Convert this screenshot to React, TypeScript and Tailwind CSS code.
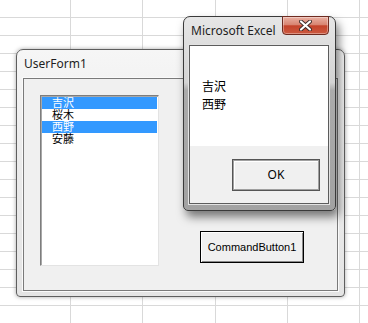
import React from 'react';

const uiFont = { fontFamily: '"Noto Sans", "Liberation Sans", sans-serif' };
const jpFont = { fontFamily: '"Liberation Sans", "Noto Sans CJK JP", sans-serif' };

const gridCols = [70, 142, 215, 287, 359];
const gridRows = Array.from({ length: 17 }, (_, i) => 17 + i * 18);

const listItems = [
  { label: '吉沢', selected: true },
  { label: '桜木', selected: false },
  { label: '西野', selected: true },
  { label: '安藤', selected: false },
];

function SheetGrid() {
  return (
    <svg className="absolute inset-0" width={368} height={323}>
      {gridCols.map((x) => (
        <line key={`c${x}`} x1={x + 0.5} y1={0} x2={x + 0.5} y2={323} stroke="#d9d9d9" />
      ))}
      {gridRows.map((y) => (
        <line key={`r${y}`} x1={0} y1={y + 0.5} x2={368} y2={y + 0.5} stroke="#d9d9d9" />
      ))}
    </svg>
  );
}

function CloseGlyph() {
  return (
    <svg width="13" height="11" viewBox="0 0 13 11">
      <path d="M2 1.5 L11 9.5 M11 1.5 L2 9.5" stroke="#3b2a28" strokeWidth="4" strokeLinecap="round" />
      <path d="M2 1.5 L11 9.5 M11 1.5 L2 9.5" stroke="#ffffff" strokeWidth="2.2" strokeLinecap="round" />
    </svg>
  );
}

function UserForm() {
  return (
    <div className="absolute left-[16px] top-[49px] flex h-[248px] w-[329px] flex-col rounded-t-[7px] rounded-b-[4px] border border-[#5e5e5e] bg-[linear-gradient(to_bottom,#f6f6f6_0%,#ececec_40%,#e4e4e4_100%)] px-[6px] pb-[5px] shadow-[0_0_4px_rgba(0,0,0,0.35)]">
      <div className="flex h-[28px] items-center pl-[1px] text-[12px] text-[#1e1e1e]" style={uiFont}>
        UserForm1
      </div>
      <div className="flex flex-1 items-start border border-[#7a7a7a] bg-[#f0f0f0] pl-[16px] pt-[16px] shadow-[0_0_0_1px_#fafafa]">
        <div className="h-[171px] w-[119px] border border-t-[#7d7d7d] border-l-[#7d7d7d] border-r-[#e3e3e3] border-b-[#e3e3e3] bg-white p-[1px] shadow-[inset_1px_1px_0_#a8a8a8]">
          {listItems.map((item) => (
            <div
              key={item.label}
              className={`h-[12px] pl-[10px] text-[11px] leading-[12px] ${item.selected ? 'bg-[#3399ff] text-white' : 'text-black'}`}
              style={jpFont}
            >
              {item.label}
            </div>
          ))}
        </div>
        <button
          type="button"
          className="ml-[41px] mt-[136px] h-[32px] w-[104px] border border-black bg-[#f0f0f0] text-[11px] text-black shadow-[inset_1px_1px_0_#ffffff,inset_-1px_-1px_0_#8a8a8a]"
          style={jpFont}
        >
          CommandButton1
        </button>
      </div>
    </div>
  );
}

function MessageBox() {
  return (
    <div className="absolute left-[183px] top-[16px] flex h-[195px] w-[153px] flex-col rounded-t-[7px] rounded-b-[5px] border border-[#3a3a3a] bg-[linear-gradient(to_bottom,#e6e6e6_0%,#d3d3d3_34%,#ababab_38%,#a2a2a2_100%)] pl-[5px] pr-[6px] pb-[6px] shadow-[3px_6px_10px_rgba(0,0,0,0.5)]">
      <div className="relative flex h-[28px] items-center pl-[2px] text-[12px] text-[#1e1e1e]" style={uiFont}>
        Microsoft Excel
        <div className="absolute -top-[1px] left-[93px] flex h-[19px] w-[47px] items-center justify-center rounded-b-[4px] border border-[#6e2b20] bg-[linear-gradient(to_bottom,#eab0a2_0%,#d88572_45%,#c4432b_52%,#cc5a40_100%)] shadow-[inset_0_0_0_1px_rgba(255,255,255,0.35)]">
          <CloseGlyph />
        </div>
      </div>
      <div className="flex flex-1 flex-col border border-[#5c5c5c] shadow-[0_0_0_1px_#e2e2e2]">
        <div className="h-[100px] bg-white pl-[12px] pt-[32px] text-[12px] leading-[18px] text-black" style={jpFont}>
          <div>吉沢</div>
          <div>西野</div>
        </div>
        <div className="flex-1 bg-[#f0f0f0] pl-[42px] pt-[13px]">
          <button
            type="button"
            className="h-[32px] w-[88px] border border-[#555555] bg-[#f0f0f0] text-[12px] text-black shadow-[inset_1px_1px_0_#a0a0a0,inset_-1px_-1px_0_#a0a0a0,inset_2px_2px_0_#ffffff]"
            style={uiFont}
          >
            OK
          </button>
        </div>
      </div>
    </div>
  );
}

export default function App() {
  return (
    <div className="relative h-[323px] w-[368px] overflow-hidden bg-white">
      <SheetGrid />
      <UserForm />
      <MessageBox />
    </div>
  );
}
